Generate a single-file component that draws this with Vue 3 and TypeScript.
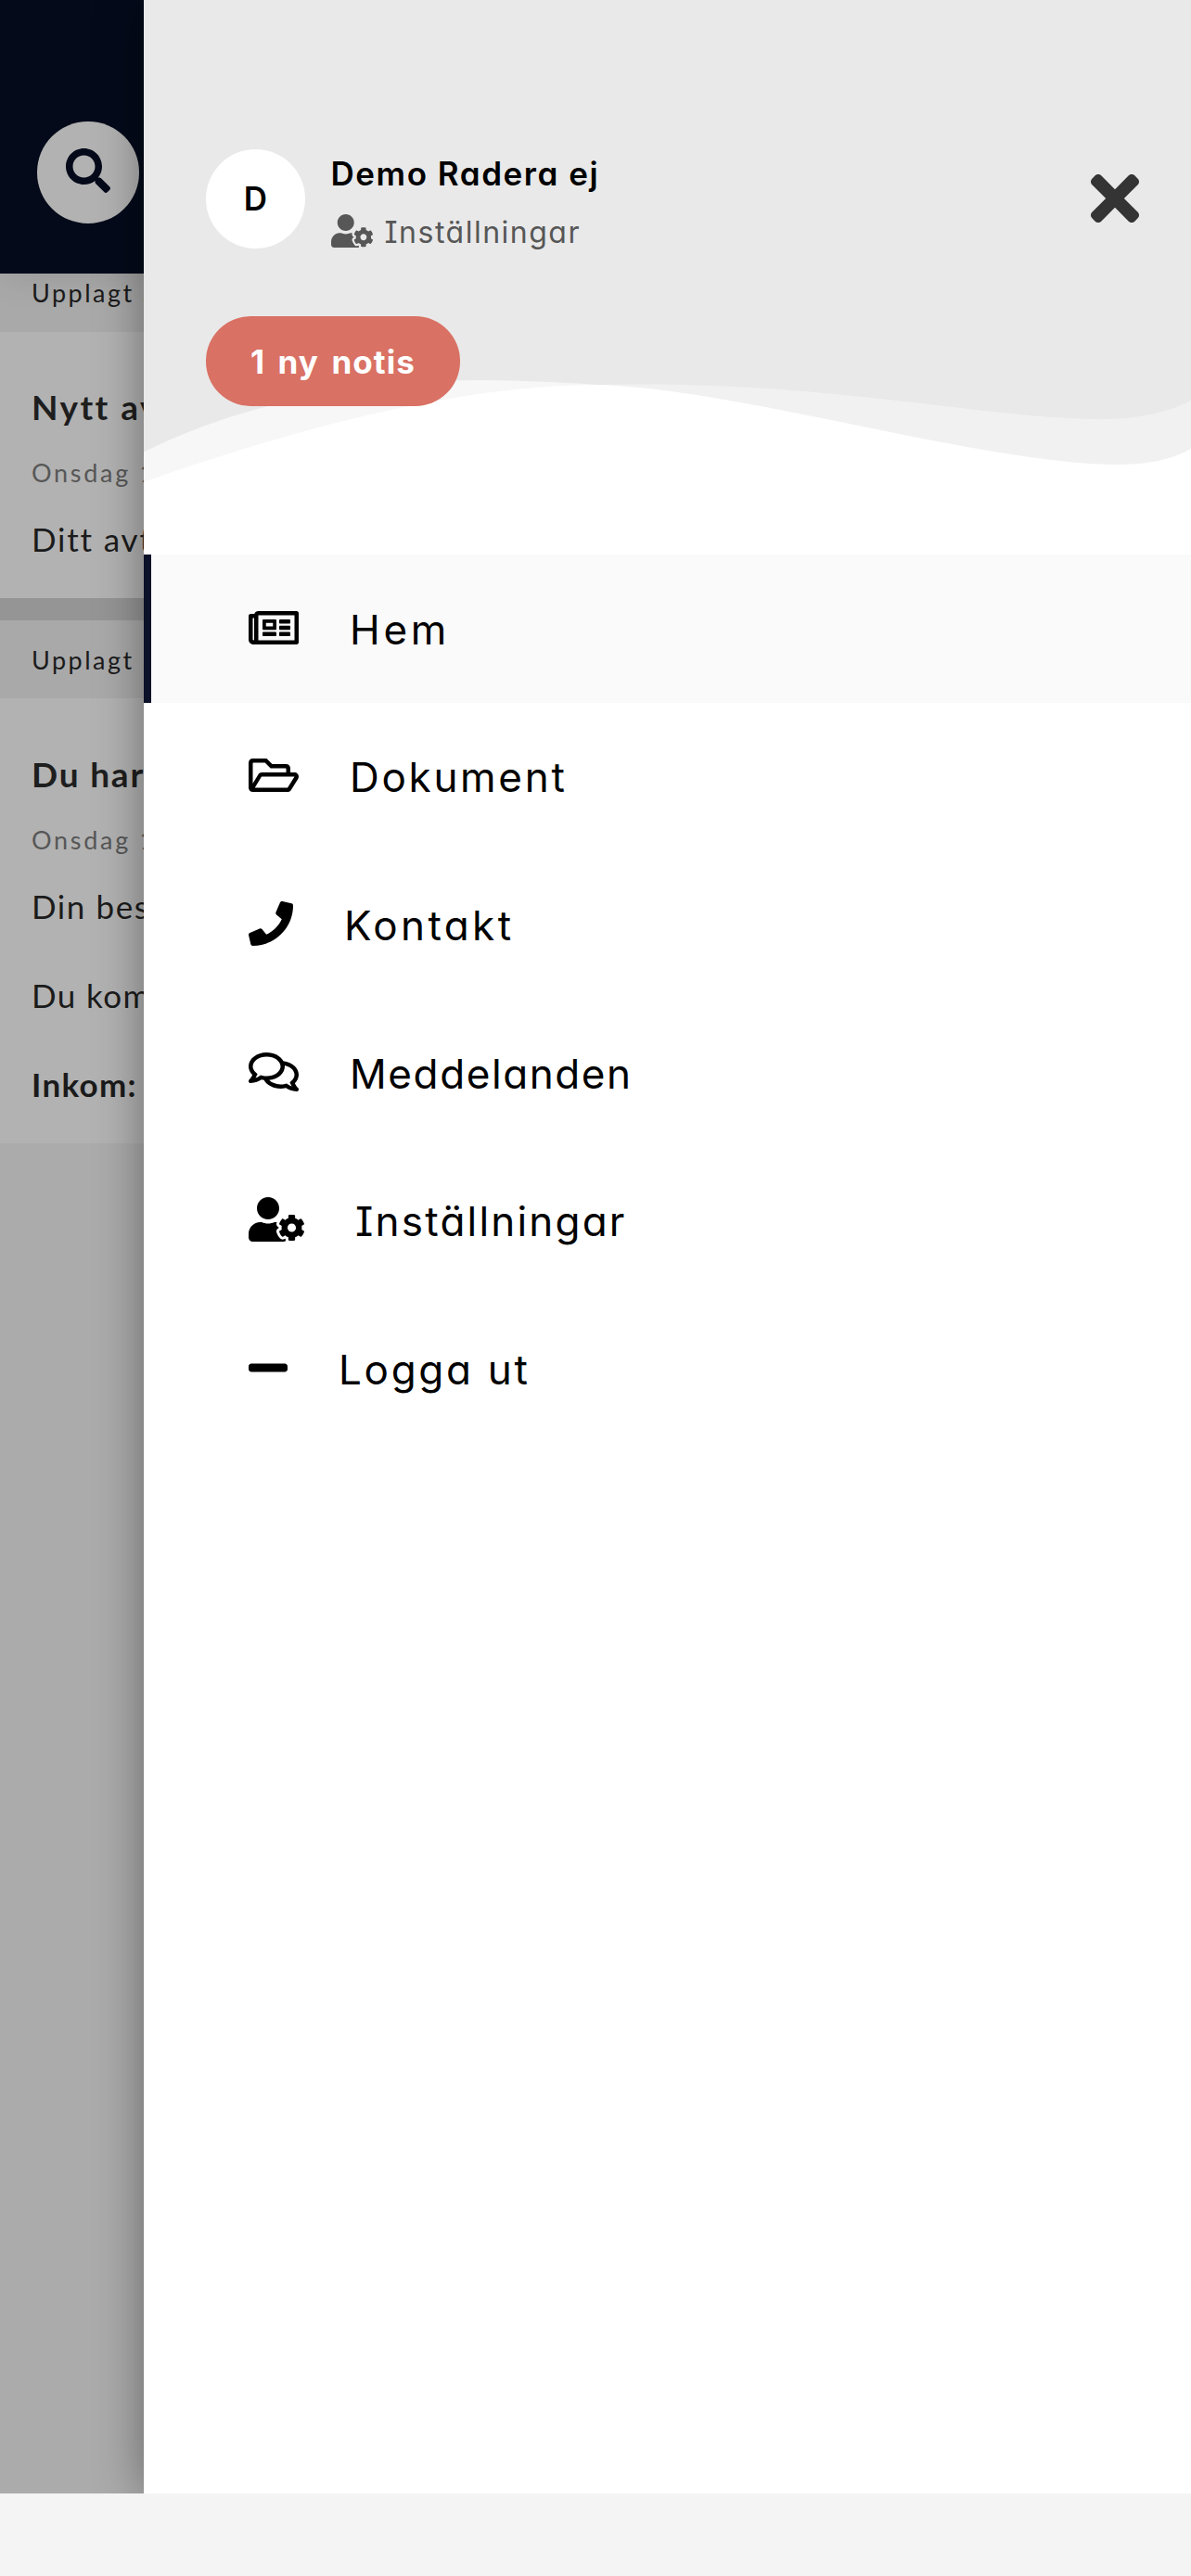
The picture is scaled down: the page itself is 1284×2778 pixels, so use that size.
<script setup lang="ts">
interface Icon {
  w: number
  h: number
  d: string
}

interface MenuItem {
  label: string
  icon: Icon
  spacing: number
  active?: boolean
}

interface Line {
  kind: 'title' | 'date' | 'body' | 'spaced' | 'strong'
  text: string
  spacing: number
}

const newspaper: Icon = {
  w: 576,
  h: 512,
  d: 'M552 64H112c-20.858 0-38.643 13.377-45.248 32H24c-13.255 0-24 10.745-24 24v272c0 30.928 25.072 56 56 56h496c13.255 0 24-10.745 24-24V88c0-13.255-10.745-24-24-24zM48 392V144h16v248c0 4.411-3.589 8-8 8s-8-3.589-8-8zm480 8H111.422c.374-2.614.578-5.283.578-8V112h416v288zM172 280h136c6.627 0 12-5.373 12-12v-96c0-6.627-5.373-12-12-12H172c-6.627 0-12 5.373-12 12v96c0 6.627 5.373 12 12 12zm28-80h80v40h-80v-40zm-40 140v-24c0-6.627 5.373-12 12-12h136c6.627 0 12 5.373 12 12v24c0 6.627-5.373 12-12 12H172c-6.627 0-12-5.373-12-12zm192 0v-24c0-6.627 5.373-12 12-12h104c6.627 0 12 5.373 12 12v24c0 6.627-5.373 12-12 12H364c-6.627 0-12-5.373-12-12zm0-144v-24c0-6.627 5.373-12 12-12h104c6.627 0 12 5.373 12 12v24c0 6.627-5.373 12-12 12H364c-6.627 0-12-5.373-12-12zm0 72v-24c0-6.627 5.373-12 12-12h104c6.627 0 12 5.373 12 12v24c0 6.627-5.373 12-12 12H364c-6.627 0-12-5.373-12-12z',
}
const folderOpen: Icon = {
  w: 576,
  h: 512,
  d: 'M527.9 224H480v-48c0-26.5-21.5-48-48-48H272l-64-64H48C21.5 64 0 85.5 0 112v288c0 26.5 21.5 48 48 48h400c16.5 0 31.9-8.5 40.7-22.6l79.9-128c20-31.9-3-73.4-40.7-73.4zM48 118c0-3.3 2.7-6 6-6h134.1l64 64H426c3.3 0 6 2.7 6 6v42H152c-16.8 0-32.4 8.8-41.1 23.2L48 351.4zm400 282H72l77.2-128H528z',
}
const phone: Icon = {
  w: 512,
  h: 512,
  d: 'M493.4 24.6l-104-24c-11.3-2.6-22.9 3.3-27.5 13.9l-48 112c-4.2 9.8-1.4 21.3 6.9 28l60.6 49.6c-36 76.7-98.9 140.5-177.2 177.2l-49.6-60.6c-6.8-8.3-18.2-11.1-28-6.9l-112 48C3.9 366.5-2 378.1.6 389.4l24 104C27.1 504.2 36.7 512 48 512c256.1 0 464-207.5 464-464 0-11.2-7.7-20.9-18.6-23.4z',
}
const comments: Icon = {
  w: 576,
  h: 512,
  d: 'M532 386.2c27.5-27.1 44-61.1 44-98.2 0-80-76.5-146.1-176.2-157.9C368.3 72.5 294.3 32 208 32 93.1 32 0 103.6 0 192c0 37 16.5 71 44 98.2-15.3 30.7-37.3 54.5-37.7 54.9-6.3 6.7-8.1 16.5-4.4 25 3.6 8.5 12 14 21.2 14 53.5 0 96.7-20.2 125.2-38.8 9.2 2.1 18.7 3.7 28.4 4.9C208.1 407.6 281.8 448 368 448c20.8 0 40.8-2.4 59.8-6.8C456.3 459.7 499.4 480 553 480c9.2 0 17.5-5.5 21.2-14 3.6-8.5 1.9-18.3-4.4-25-.4-.3-22.5-24.1-37.8-54.8zm-392.8-92.3L122.1 305c-14.1 9.1-28.5 16.3-43.1 21.4 2.7-4.7 5.4-9.7 8-14.8l15.5-31.1L77.7 256C64.2 242.6 48 220.7 48 192c0-60.7 73.3-112 160-112s160 51.3 160 112-73.3 112-160 112c-16.5 0-33-1.9-49-5.6l-19.8-4.5zM498.3 352l-24.7 24.4 15.5 31.1c2.6 5.1 5.3 10.1 8 14.8-14.6-5.1-29-12.3-43.1-21.4l-17.1-11.1-19.9 4.6c-16 3.7-32.5 5.6-49 5.6-54 0-102.2-20.1-131.3-49.7C338 339.5 416 272.9 416 192c0-3.4-.4-6.7-.7-10C479.7 196.5 528 238.8 528 288c0 28.7-16.2 50.6-29.7 64z',
}
const userCog: Icon = {
  w: 640,
  h: 512,
  d: 'M610.5 373.3c2.6-14.1 2.6-28.5 0-42.6l25.8-14.9c3-1.7 4.3-5.2 3.3-8.5-6.7-21.6-18.2-41.2-33.2-57.4-2.3-2.5-6-3.1-9-1.4l-25.8 14.9c-10.9-9.3-23.4-16.5-36.9-21.3v-29.8c0-3.4-2.4-6.4-5.7-7.1-22.3-5-45-4.8-66.2 0-3.3.7-5.7 3.7-5.7 7.1v29.8c-13.5 4.8-26 12-36.9 21.3l-25.8-14.9c-2.9-1.7-6.7-1.1-9 1.4-15 16.2-26.5 35.8-33.2 57.4-1 3.3.4 6.8 3.3 8.5l25.8 14.9c-2.6 14.1-2.6 28.5 0 42.6l-25.8 14.9c-3 1.7-4.3 5.2-3.3 8.5 6.7 21.6 18.2 41.1 33.2 57.4 2.3 2.5 6 3.1 9 1.4l25.8-14.9c10.9 9.3 23.4 16.5 36.9 21.3v29.8c0 3.4 2.4 6.4 5.7 7.1 22.3 5 45 4.8 66.2 0 3.3-.7 5.7-3.7 5.7-7.1v-29.8c13.5-4.8 26-12 36.9-21.3l25.8 14.9c2.9 1.7 6.7 1.1 9-1.4 15-16.2 26.5-35.8 33.2-57.4 1-3.3-.4-6.8-3.3-8.5l-25.8-14.9zM496 400.5c-26.8 0-48.5-21.8-48.5-48.5s21.8-48.5 48.5-48.5 48.5 21.8 48.5 48.5-21.7 48.5-48.5 48.5zM224 256c70.7 0 128-57.3 128-128S294.7 0 224 0 96 57.3 96 128s57.3 128 128 128zm201.2 226.5c-2.3-1.2-4.6-2.6-6.8-3.9l-7.9 4.6c-6 3.4-12.8 5.3-19.6 5.3-10.9 0-21.4-4.6-28.9-12.6-18.3-19.8-32.3-43.9-40.2-69.6-5.5-17.7 1.9-36.4 17.9-45.7l7.9-4.6c-.1-2.6-.1-5.2 0-7.8l-7.9-4.6c-16-9.2-23.4-28-17.9-45.7.9-2.9 2.2-5.8 3.2-8.7-3.8-.3-7.5-1.2-11.4-1.2h-16.7c-22.2 10.2-46.9 16-72.9 16s-50.6-5.8-72.9-16h-16.7C60.2 288 0 348.2 0 422.4V464c0 26.5 21.5 48 48 48h352c10.1 0 19.5-3.2 27.2-8.5-1.2-3.8-2-7.7-2-11.8v-9.2z',
}
const minus: Icon = {
  w: 448,
  h: 512,
  d: 'M416 208H32c-17.67 0-32 14.33-32 32v32c0 17.67 14.33 32 32 32h384c17.67 0 32-14.33 32-32v-32c0-17.67-14.33-32-32-32z',
}

const menu: MenuItem[] = [
  { label: 'Hem', icon: newspaper, spacing: 3.7, active: true },
  { label: 'Dokument', icon: folderOpen, spacing: 2.7 },
  { label: 'Kontakt', icon: phone, spacing: 3.4 },
  { label: 'Meddelanden', icon: comments, spacing: 1.6 },
  { label: 'Inställningar', icon: userCog, spacing: 2.2 },
  { label: 'Logga ut', icon: minus, spacing: 2.7 },
]

const firstPost: Line[] = [
  { kind: 'title', text: 'Nytt avtal', spacing: 2.4 },
  { kind: 'date', text: 'Onsdag 1', spacing: 2.7 },
  { kind: 'body', text: 'Ditt avtal', spacing: 1.8 },
]

const secondPost: Line[] = [
  { kind: 'title', text: 'Du har', spacing: 1.8 },
  { kind: 'date', text: 'Onsdag 1', spacing: 2.7 },
  { kind: 'body', text: 'Din best', spacing: 1.6 },
  { kind: 'spaced', text: 'Du komm', spacing: 1.4 },
  { kind: 'strong', text: 'Inkom:', spacing: 1.3 },
]
</script>

<template>
  <div class="screen">
    <div class="app">
      <div class="feed">
        <header class="topbar">
          <div class="search">
            <svg viewBox="0 0 512 512" width="48" height="48">
              <path d="M505 442.7L405.3 343c-4.5-4.5-10.6-7-17-7H372c27.6-35.3 44-79.7 44-128C416 93.1 322.9 0 208 0S0 93.1 0 208s93.1 208 208 208c48.3 0 92.7-16.4 128-44v16.3c0 6.4 2.5 12.5 7 17l99.7 99.7c9.4 9.4 24.6 9.4 33.9 0l28.3-28.3c9.4-9.4 9.4-24.6.1-34zM208 336c-70.7 0-128-57.2-128-128 0-70.7 57.2-128 128-128 70.7 0 128 57.2 128 128 0 70.7-57.2 128-128 128z" />
            </svg>
          </div>
        </header>
        <div class="strip strip-first">Upplagt av</div>
        <article class="card card-first">
          <p v-for="line in firstPost" :key="line.text" :class="line.kind" :style="{ letterSpacing: line.spacing + 'px' }">{{ line.text }}</p>
        </article>
        <div class="divider"></div>
        <div class="strip strip-second">Upplagt av</div>
        <article class="card card-second">
          <p v-for="line in secondPost" :key="line.text" :class="line.kind" :style="{ letterSpacing: line.spacing + 'px' }">{{ line.text }}</p>
        </article>
      </div>

      <aside class="drawer">
        <div class="head">
          <svg class="waves" viewBox="155 400 1129 198" width="1129" height="198">
            <path fill="#f7f7f7" d="M155 487.500C280 425.300 420 408.700 530 410Q590 411 645 415V598H155z" />
            <path fill="#f1f1f1" d="M645 415C890 409.500 1060 451.600 1187 452C1225 452.500 1260 444.400 1284 432V598H645z" />
            <path fill="#fff" d="M155 519.700C335 456.600 500 415.500 645 415C800 419.500 1060 501 1207 501C1240 501 1265 494.500 1284 484V598H155z" />
          </svg>
          <div class="user">
            <div class="avatar">D</div>
            <div class="who">
              <div class="name">Demo Radera ej</div>
              <div class="settings">
                <svg :viewBox="`0 0 ${userCog.w} ${userCog.h}`" width="45" height="36"><path :d="userCog.d" /></svg>
                <span>Inställningar</span>
              </div>
            </div>
            <svg class="close" viewBox="0 80 352 352" width="52" height="52">
              <path d="M242.72 256l100.07-100.07c12.28-12.28 12.28-32.19 0-44.48l-22.24-22.24c-12.28-12.28-32.19-12.28-44.48 0L176 189.28 75.93 89.21c-12.28-12.28-32.19-12.28-44.48 0L9.21 111.45c-12.28 12.28-12.28 32.19 0 44.48L109.28 256 9.21 356.07c-12.28 12.28-12.28 32.19 0 44.48l22.24 22.24c12.28 12.28 32.2 12.28 44.48 0L176 322.72l100.07 100.07c12.28 12.28 32.2 12.28 44.48 0l22.24-22.24c12.28-12.28 12.28-32.19 0-44.48L242.72 256z" />
            </svg>
          </div>
          <button class="notice" type="button">1 ny notis</button>
        </div>

        <nav class="menu">
          <a v-for="item in menu" :key="item.label" class="item" :class="{ active: item.active }">
            <svg :viewBox="`0 0 ${item.icon.w} ${item.icon.h}`" :width="(item.icon.w / 512) * 48" height="48"><path :d="item.icon.d" /></svg>
            <span :style="{ letterSpacing: item.spacing + 'px' }">{{ item.label }}</span>
          </a>
        </nav>
      </aside>
    </div>
    <div class="bottom"></div>
  </div>
</template>

<style>
body {
  background: #f4f4f4;
}
</style>

<style scoped>
.screen {
  width: 1284px;
  height: 2778px;
  display: flex;
  flex-direction: column;
  overflow: hidden;
  font-family: Inter, "Open Sans", sans-serif;
}
.app {
  height: 2689px;
  display: flex;
  overflow: hidden;
}
.bottom {
  flex: 1;
  background: #f4f4f4;
}

/* Dimmed page behind the drawer */
.feed {
  width: 155px;
  flex: none;
  overflow: hidden;
  background: #ababab;
  font-family: Lato, "Open Sans", sans-serif;
  white-space: nowrap;
}
.topbar {
  position: relative;
  height: 294.5px;
  box-sizing: border-box;
  padding: 131px 0 0 40px;
  background: #040a1a;
  box-shadow: 0 0 40px rgba(0, 0, 0, 0.12);
}
.search {
  width: 109.5px;
  height: 109.5px;
  border-radius: 50%;
  background: #b2b2b2;
  display: flex;
  align-items: center;
  justify-content: center;
}
.search svg {
  fill: #040a1a;
  margin-bottom: 3px;
}
.strip {
  box-sizing: border-box;
  padding-left: 34px;
  background: #a9a9a9;
  color: #1b1b1b;
  font-size: 27px;
  letter-spacing: 2.5px;
}
.strip-first {
  height: 63.2px;
  line-height: 41px;
}
.strip-second {
  height: 84.6px;
  padding-top: 2px;
  line-height: 81.8px;
}
.card {
  box-sizing: border-box;
  padding: 46.7px 0 0 34px;
  background: #b2b2b2;
}
.card-first {
  height: 287px;
}
.card-second {
  height: 479.3px;
}
.divider {
  height: 24px;
  background: #959595;
}
p {
  margin: 0;
}
.title {
  font-size: 37px;
  font-weight: 700;
  line-height: 70px;
  color: #1e1e1e;
}
.date {
  font-size: 27px;
  line-height: 71.6px;
  color: #575757;
}
.body,
.spaced,
.strong {
  font-size: 35px;
  line-height: 71.6px;
  color: #1b1b1b;
}
.spaced {
  line-height: 121px;
}
.strong {
  font-weight: 700;
}

/* Drawer */
.drawer {
  position: relative;
  flex: 1;
  background: #fff;
  box-shadow: 0 0 48px rgba(0, 0, 0, 0.4);
  font-feature-settings: "cv11", "cv08";
}
.head {
  position: relative;
  height: 598.3px;
  box-sizing: border-box;
  padding: 160.5px 56px 0 67px;
  background: #e9e9e9;
}
.waves {
  position: absolute;
  left: 0;
  bottom: 0;
  display: block;
}
.user {
  position: relative;
  height: 126.8px;
  display: flex;
  align-items: flex-start;
}
.avatar {
  width: 107px;
  height: 107px;
  border-radius: 50%;
  background: #fff;
  font-size: 35px;
  font-weight: 600;
  line-height: 106px;
  text-align: center;
}
.who {
  margin-left: 27.5px;
}
.name {
  font-size: 35px;
  font-weight: 600;
  line-height: 52px;
  letter-spacing: 1.55px;
}
.settings {
  display: flex;
  align-items: center;
  gap: 13px;
  height: 75px;
  font-size: 32px;
  line-height: 75px;
  letter-spacing: 1.5px;
  color: #575757;
}
.settings svg {
  fill: #575757;
  margin-bottom: 3px;
}
.close {
  margin: 27.5px 0 0 auto;
  fill: #343434;
}
.notice {
  position: relative;
  display: block;
  width: 274px;
  height: 96.5px;
  margin-top: 54px;
  padding: 0;
  border: 0;
  border-radius: 48.25px;
  background: #d97164;
  color: #fff;
  font: inherit;
  font-feature-settings: inherit;
  font-size: 35px;
  font-weight: 700;
  letter-spacing: 1.1px;
  word-spacing: 4px;
}
.item {
  height: 159.65px;
  box-sizing: border-box;
  padding-left: 113px;
  display: flex;
  align-items: center;
  gap: 55px;
  font-size: 44px;
  line-height: 60px;
  color: #000;
}
.item svg {
  margin-bottom: 3px;
}
.item span {
  padding-top: 1px;
}
.active {
  background: #fafafa;
  box-shadow: inset 8px 0 0 #0a1128;
}
</style>
